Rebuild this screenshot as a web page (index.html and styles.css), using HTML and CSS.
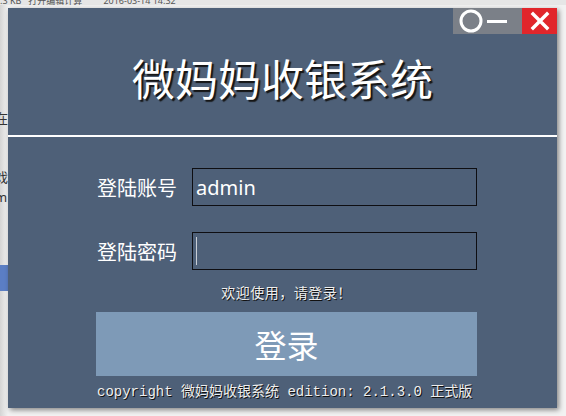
FILE: index.html
```html
<!DOCTYPE html>
<html lang="zh-CN">
<head>
  <meta charset="UTF-8" />
  <title>微妈妈收银系统 - 登录</title>
  <link rel="stylesheet" href="styles.css">
</head>
<body>
  <div class="desktop">
    <div class="behind-top">.3 KB &nbsp; 打开编辑计算 &nbsp; &nbsp; &nbsp; &nbsp; 2016-03-14 14:32</div>
    <div class="behind-left">
      <span>在</span>
      <span>戏</span>
      <span>m</span>
    </div>
    <div class="behind-blue"></div>

    <div class="window">
      <div class="titlebar">
        <div class="controls">
          <span class="ctl ctl-circle"><svg width="24" height="24" viewBox="0 0 24 24"><circle cx="12" cy="12" r="10" fill="none" stroke="#fff" stroke-width="3"/></svg></span>
          <span class="ctl ctl-min"><svg width="24" height="24" viewBox="0 0 24 24"><rect x="2" y="11" width="20" height="3" fill="#fff"/></svg></span>
        </div>
        <span class="ctl ctl-close"><svg width="22" height="22" viewBox="0 0 22 22"><path d="M4 4 L18 18 M18 4 L4 18" stroke="#fff" stroke-width="3.4" stroke-linecap="square"/></svg></span>
      </div>

      <h1 class="app-title">微妈妈收银系统</h1>
      <div class="divider"></div>

      <div class="login-form">
        <div class="row">
          <label class="label">登陆账号</label>
          <div class="field">admin</div>
        </div>
        <div class="row">
          <label class="label">登陆密码</label>
          <div class="field"><span class="caret"></span></div>
        </div>
        <p class="welcome">欢迎使用，请登录！</p>
        <button class="login-btn">登录</button>
        <p class="copyright">copyright 微妈妈收银系统 edition: 2.1.3.0 正式版</p>
      </div>
    </div>
  </div>
</body>
</html>
```

FILE: styles.css
```css
body {
  margin: 0;
  background: #ececec;
  font-family: "Noto Sans", "Noto Sans CJK SC", sans-serif;
  overflow: hidden;
}
.desktop {
  position: relative;
  width: 566px;
  height: 416px;
  background: linear-gradient(to right, #d4d4d4 0, #f2f2f2 8px, #f2f2f2 100%);
}
.behind-top {
  position: absolute;
  top: -4px;
  left: 0;
  width: 566px;
  height: 9px;
  font-size: 9px;
  line-height: 10px;
  color: #555;
  white-space: nowrap;
  background: #e6e6e6;
  overflow: hidden;
}
.behind-left {
  position: absolute;
  top: 108px;
  left: -5px;
  display: flex;
  flex-direction: column;
  gap: 40px;
  font-size: 13px;
  color: #333;
}
.behind-left span:last-child {
  margin-top: -38px;
}
.behind-blue {
  position: absolute;
  top: 265px;
  left: 0;
  width: 8px;
  height: 26px;
  background: #5b7ec4;
}
.window {
  position: relative;
  top: 8px;
  left: 8px;
  width: 549px;
  height: 400px;
  background: #4e6078;
  box-shadow: 2px 2px 5px rgba(0, 0, 0, 0.45);
  display: flex;
  flex-direction: column;
}
.titlebar {
  height: 26px;
  display: flex;
  justify-content: flex-end;
}
.controls {
  width: 69px;
  background: #7b8088;
  display: flex;
  align-items: center;
  padding-left: 6px;
  box-sizing: border-box;
  gap: 2px;
}
.ctl {
  display: flex;
  align-items: center;
  justify-content: center;
}
.ctl-close {
  width: 35px;
  background: #e1262b;
}
.app-title {
  margin: 18px 0 0 0;
  height: 50px;
  line-height: 50px;
  font-size: 43px;
  font-weight: normal;
  font-family: "Noto Sans CJK SC", sans-serif;
  color: #fff;
  text-align: center;
  text-shadow: 2px 2px 1px #151515;
}
.divider {
  margin-top: 33px;
  height: 2px;
  background: #fff;
}
.login-form {
  margin: 31px 0 0 88px;
  width: 381px;
  display: flex;
  flex-direction: column;
}
.row {
  display: flex;
  align-items: center;
  margin-bottom: 26px;
}
.row:nth-child(2) {
  margin-bottom: 0;
}
.label {
  width: 96px;
  padding-left: 1px;
  box-sizing: border-box;
  font-size: 20px;
  font-family: "Noto Sans CJK SC", sans-serif;
  color: #fff;
}
.field {
  width: 285px;
  height: 38px;
  box-sizing: border-box;
  border: 1px solid #0e0e12;
  padding-left: 3px;
  display: flex;
  align-items: center;
  font-size: 20px;
  color: #fff;
}
.caret {
  width: 1px;
  height: 28px;
  background: #c9ced6;
}
.welcome {
  margin: 14px 0 0 0;
  line-height: 16px;
  font-size: 14px;
  font-family: "Noto Sans CJK SC", sans-serif;
  color: #eee;
  text-align: center;
  letter-spacing: 0.5px;
  text-shadow: 1px 1px 0 #111;
}
.login-btn {
  margin-top: 12px;
  height: 64px;
  width: 381px;
  border: none;
  background: #7e9ab7;
  color: #fff;
  font-size: 32px;
  font-family: "Noto Sans CJK SC", sans-serif;
  padding: 0;
}
.copyright {
  margin: 8px 0 0 1px;
  line-height: 16px;
  font-size: 14px;
  font-family: "Liberation Mono", "Noto Sans CJK SC", monospace;
  color: #eee;
  white-space: nowrap;
  text-shadow: 1px 1px 0 #111;
}
```
